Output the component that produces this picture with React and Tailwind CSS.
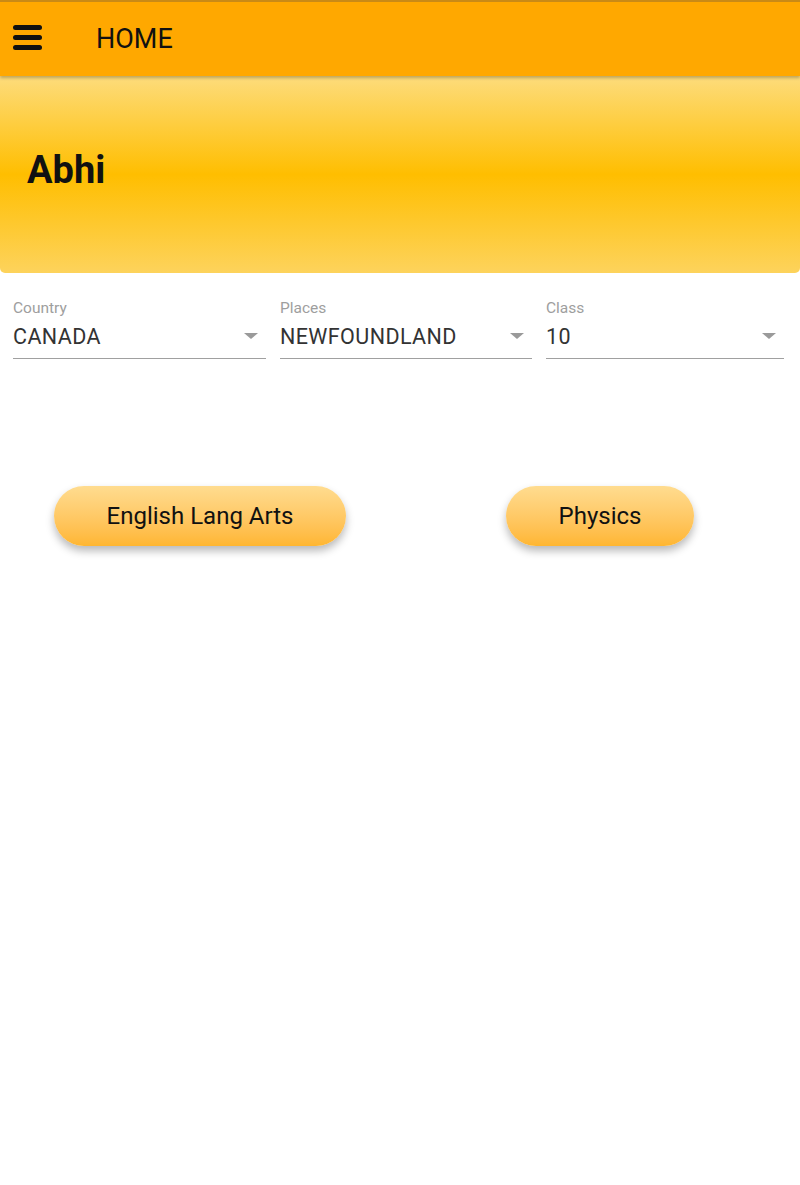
const font = { fontFamily: 'Roboto, "Liberation Sans", sans-serif' }

function Select({ label, value, className }) {
  return (
    <div className={`flex flex-col ${className}`}>
      <span className="text-[15.5px] leading-[18px] text-[#9e9e9e]">{label}</span>
      <div className="flex items-center justify-between h-[42px] border-b border-[#a0a0a0]">
        <span className="text-[21.5px] tracking-[0.4px] text-[#333333]">{value}</span>
        <span className="w-0 h-0 border-l-[7px] border-r-[7px] border-t-[6px] border-l-transparent border-r-transparent border-t-[#9a9a9a] mr-[8px] mb-[4px]" />
      </div>
    </div>
  )
}

function Pill({ children, className }) {
  return (
    <button
      className={`h-[60px] rounded-full bg-gradient-to-b from-[#ffdc8f] to-[#ffb630] shadow-[0_5px_8px_rgba(0,0,0,0.28)] text-[24px] text-[#111] ${className}`}
    >
      {children}
    </button>
  )
}

export default function App() {
  return (
    <div className="min-h-[1185px] bg-white" style={font}>
      <div className="h-[76px] bg-[#ffa800] border-t-2 border-[#c98a16] flex items-center shadow-[0_2px_3px_rgba(0,0,0,0.25)] relative z-10">
        <div className="ml-[13px] w-[29px] flex flex-col gap-[5px] mt-[-3px]">
          <span className="h-[5px] rounded-full bg-[#111]" />
          <span className="h-[5px] rounded-full bg-[#111]" />
          <span className="h-[5px] rounded-full bg-[#111]" />
        </div>
        <span className="ml-[54px] text-[27px] text-[#111] mt-[1px]">HOME</span>
      </div>
      <div className="h-[197px] rounded-b-[5px] bg-[linear-gradient(to_bottom,#fddc7c_0%,#ffbe00_50%,#fdd35c_100%)] flex items-center">
        <span className="ml-[27px] text-[38px] font-bold text-[#111] mt-[-8px]">Abhi</span>
      </div>
      <div className="flex px-[13px] gap-[14px] pt-[26px]">
        <Select label="Country" value="CANADA" className="w-[253px]" />
        <Select label="Places" value="NEWFOUNDLAND" className="w-[252px]" />
        <Select label="Class" value="10" className="w-[238px]" />
      </div>
      <div className="flex pt-[127px]">
        <Pill className="ml-[54px] w-[292px]">English Lang Arts</Pill>
        <Pill className="ml-[160px] w-[188px]">Physics</Pill>
      </div>
    </div>
  )
}
